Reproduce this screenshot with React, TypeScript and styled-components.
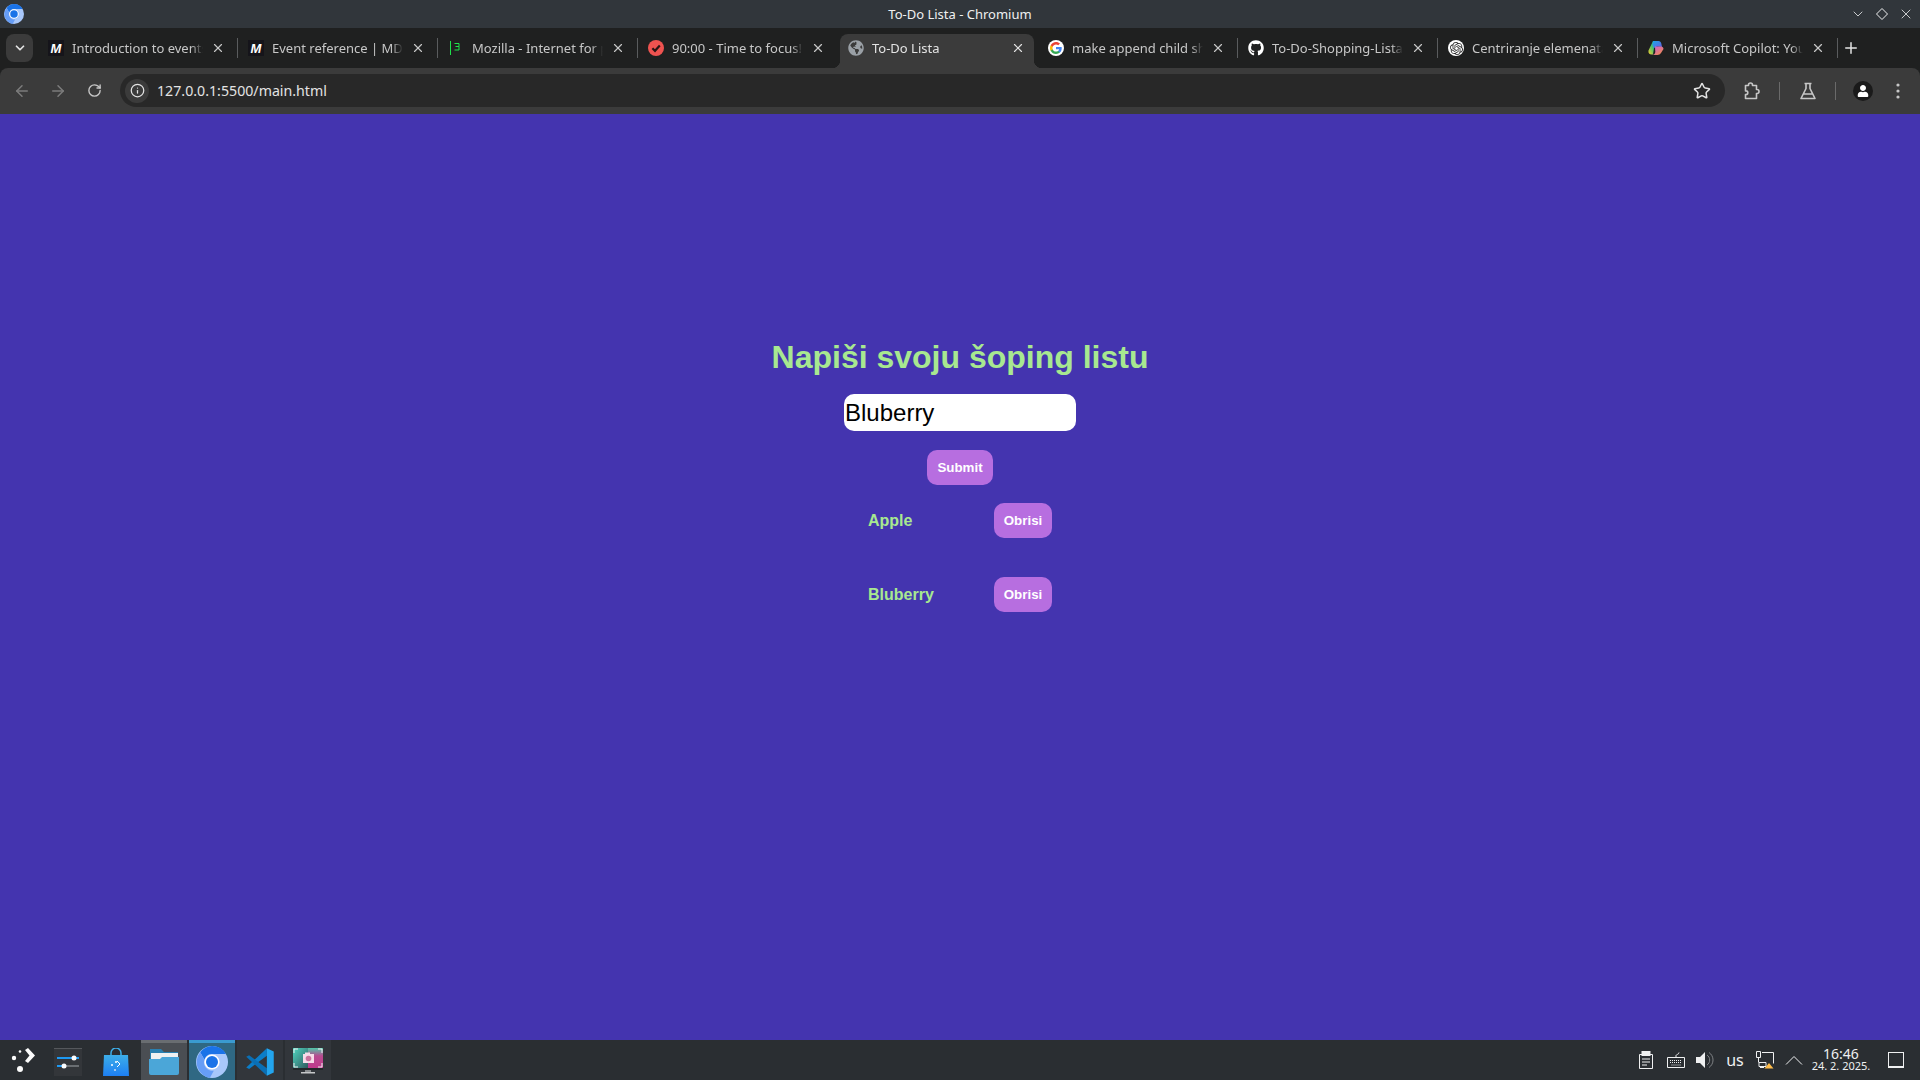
import React from "react";
import styled, { createGlobalStyle } from "styled-components";
import { ArrowLeft, ArrowRight, RotateCw, Info, Star, X, Plus, ChevronDown } from "lucide-react";
import { FaGithub, FaGlobeAmericas, FaUser } from "react-icons/fa";
import { SiOpenai } from "react-icons/si";

const Global = createGlobalStyle`
  html, body { margin: 0; padding: 0; height: 100%; overflow: hidden; }
  * { box-sizing: border-box; }
  body { font-family: "Noto Sans", sans-serif; }
`;

const Screen = styled.div`
  width: 1920px;
  height: 1080px;
  display: flex;
  flex-direction: column;
  background: #1f2020;
`;

const TitleBar = styled.div`
  height: 28px;
  flex: none;
  background: #31363b;
  display: flex;
  align-items: center;
  padding: 0 6px 0 4px;
  color: #eff0f1;
`;
const TitleText = styled.div`
  flex: 1;
  text-align: center;
  font-size: 13px;
  padding-left: 46px;
`;
const WinButtons = styled.div`
  display: flex;
  gap: 8px;
  align-items: center;
`;

const TabStrip = styled.div`
  height: 40px;
  flex: none;
  background: #1f2020;
  display: flex;
  padding: 6px 0 0 6px;
`;
const TabSearch = styled.div`
  width: 27px;
  height: 28px;
  border-radius: 8px;
  background: #3b3b3b;
  color: #e3e3e3;
  display: flex;
  align-items: center;
  justify-content: center;
  margin-right: 4px;
`;
const Tab = styled.div<{ $active?: boolean }>`
  position: relative;
  width: 200px;
  height: 34px;
  flex: none;
  display: flex;
  align-items: center;
  padding: 0 12px 6px 11px;
  font-size: 13px;
  color: ${(p) => (p.$active ? "#e3e3e3" : "#c7c7c7")};
  ${(p) =>
    p.$active
      ? `
    background: #3b3b3b;
    border-radius: 8px 8px 0 0;
    margin: 0 3px;
    width: 194px;
    padding: 0 9px 6px 8px;
    &::before, &::after {
      content: "";
      position: absolute;
      bottom: 0;
      width: 8px;
      height: 8px;
    }
    &::before { left: -8px; background: radial-gradient(circle at 0 0, #1f2020 8px, #3b3b3b 8.5px); }
    &::after { right: -8px; background: radial-gradient(circle at 100% 0, #1f2020 8px, #3b3b3b 8.5px); }
  `
      : ""}
`;
const TabLabel = styled.div`
  flex: 1;
  min-width: 0;
  margin: 0 8px;
  white-space: nowrap;
  overflow: hidden;
  -webkit-mask-image: linear-gradient(to right, #000 91%, transparent 100%);
  mask-image: linear-gradient(to right, #000 91%, transparent 100%);
`;
const TabSep = styled.div<{ $hidden?: boolean }>`
  width: 1px;
  height: 20px;
  margin: 4px -1px 0 0;
  flex: none;
  background: ${(p) => (p.$hidden ? "transparent" : "#5a5c5e")};
`;
const NewTab = styled.div`
  height: 28px;
  width: 28px;
  color: #e3e3e3;
  display: flex;
  align-items: center;
  justify-content: center;
`;

const Favicon = styled.span`
  width: 16px;
  height: 16px;
  flex: none;
  display: flex;
  align-items: center;
  justify-content: center;
`;
const MdnIcon = styled(Favicon)`
  background: #15141a;
  color: #fff;
  font: italic 700 13px "Liberation Sans", sans-serif;
`;
const OpenAiIcon = styled(Favicon)`
  background: #fff;
  border-radius: 50%;
  color: #2a2a2a;
`;

const Toolbar = styled.div`
  height: 46px;
  flex: none;
  background: #3b3b3b;
  border-radius: 8px 8px 0 0;
  display: flex;
  align-items: center;
  color: #c7c7c7;
  padding: 0 13px 1px 4px;
`;
const NavButton = styled.div<{ $dim?: boolean }>`
  width: 36px;
  height: 32px;
  flex: none;
  display: flex;
  align-items: center;
  justify-content: center;
  color: ${(p) => (p.$dim ? "#7c7c7c" : "#c7c7c7")};
`;
const Omnibox = styled.div`
  flex: 1;
  height: 33px;
  margin: 0 9px 0 8px;
  background: #282828;
  border-radius: 17px;
  display: flex;
  align-items: center;
  padding: 0 14px 0 5px;
`;
const SiteInfo = styled.div`
  width: 24px;
  height: 24px;
  border-radius: 50%;
  background: #3b3b3b;
  color: #e3e3e3;
  display: flex;
  align-items: center;
  justify-content: center;
  margin-right: 8px;
`;
const Url = styled.div`
  flex: 1;
  font-size: 14.2px;
  color: #e3e3e3;
`;
const ToolSep = styled.div`
  width: 1px;
  height: 18px;
  background: #6a6a6a;
`;
const ToolIcon = styled.div<{ $w: number }>`
  width: ${(p) => p.$w}px;
  flex: none;
  display: flex;
  align-items: center;
  justify-content: center;
  color: #c7c7c7;
`;
const ExtensionCell = styled(ToolIcon)`
  margin-right: 9px;
`;
const Avatar = styled.div`
  width: 20px;
  height: 20px;
  border-radius: 50%;
  background: #1a1a1a;
  display: flex;
  align-items: center;
  justify-content: center;
  overflow: hidden;
  color: #fff;
`;

const Page = styled.main`
  flex: 1;
  background: #4434af;
  display: flex;
  flex-direction: column;
  align-items: center;
  padding-top: 225px;
  font-family: "Liberation Sans", Arial, sans-serif;
`;
const Heading = styled.h1`
  margin: 0 0 18px;
  font-size: 32px;
  line-height: 37px;
  font-weight: 700;
  color: #a8e890;
`;
const TextInput = styled.input`
  width: 232px;
  height: 37px;
  border: none;
  outline: none;
  border-radius: 10px;
  padding: 0 1px;
  background: #fff;
  color: #000;
  font: 24px "Liberation Sans", Arial, sans-serif;
`;
const PurpleButton = styled.button`
  width: 58px;
  height: 35px;
  padding: 0;
  border: none;
  border-radius: 10px;
  background: #b76ee0;
  color: #fff;
  font: 700 13.33px "Liberation Sans", Arial, sans-serif;
`;
const SubmitButton = styled(PurpleButton)`
  width: 66px;
  margin-top: 19px;
`;
const List = styled.div`
  margin-top: 18px;
  display: flex;
  flex-direction: column;
  gap: 39px;
  width: 184px;
`;
const Row = styled.div`
  display: flex;
  align-items: center;
  justify-content: space-between;
`;
const ItemName = styled.span`
  font-size: 16px;
  font-weight: 700;
  color: #a8e890;
`;

const Taskbar = styled.div`
  height: 40px;
  flex: none;
  background: #2a2e32;
  display: flex;
  align-items: stretch;
`;
const Launcher = styled.div`
  width: 45px;
  display: flex;
  align-items: center;
  justify-content: center;
  padding-left: 2px;
`;
const TaskItems = styled.div`
  display: flex;
  gap: 2px;
`;
const TaskItem = styled.div<{ $state?: "open" | "active" | "idle" }>`
  width: 46px;
  display: flex;
  align-items: center;
  justify-content: center;
  border-top: 3px solid
    ${(p) => (p.$state === "active" ? "#3a9bd0" : p.$state === "open" ? "#696d71" : "transparent")};
  background: ${(p) =>
    p.$state === "active"
      ? "#2f6883"
      : p.$state === "open"
        ? "#4a4e53"
        : p.$state === "idle"
          ? "#32363b"
          : "transparent"};
`;
const Tray = styled.div`
  margin-left: auto;
  display: flex;
  align-items: center;
  color: #eff0f1;
`;
const TrayIcon = styled.div`
  width: 29.6px;
  display: flex;
  align-items: center;
  justify-content: center;
  font-size: 16px;
`;
const Clock = styled.div`
  width: 66px;
  margin-left: -1px;
  text-align: center;
  line-height: 12px;
  font-size: 14px;
  padding-bottom: 1px;
`;
const ClockDate = styled.div`
  font-size: 11px;
  line-height: 11px;
`;
const ShowDesktop = styled.div`
  width: 16px;
  height: 16px;
  margin: 0 16px 0 14px;
  border: 1px solid #eff0f1;
  border-bottom-width: 2px;
`;

const ChromiumLogo = ({ size }: { size: number }) => (
  <svg width={size} height={size} viewBox="0 0 32 32">
    <circle cx="16" cy="16" r="16" fill="#a8c7fa" />
    <path d="M16 0a16 16 0 0 1 13.9 8H16a8 8 0 0 0-7.600 5.600L4.200 6.200A16 16 0 0 1 16 0z" fill="#1a73e8" />
    <path d="M4.200 6.200A16 16 0 0 0 13.800 31.900l4-7.200A8.500 8.500 0 0 1 8.400 13.600z" fill="#669df6" />
    <circle cx="16" cy="16" r="7.600" fill="#fff" />
    <circle cx="16" cy="16" r="6" fill="#1a73e8" />
  </svg>
);

const GoogleIcon = () => (
  <svg width="16" height="16" viewBox="0 0 24 24">
    <circle cx="12" cy="12" r="12" fill="#fff" />
    <path fill="#4285f4" d="M20.600 12.200c0-.6-.1-1.200-.2-1.800H12v3.400h4.800c-.2 1.100-.8 2-1.800 2.700v2.200h2.900c1.700-1.600 2.700-3.800 2.700-6.500z" />
    <path fill="#34a853" d="M12 21c2.400 0 4.400-.8 5.900-2.200L15 16.500c-.8.500-1.800.9-3 .9-2.300 0-4.300-1.600-5-3.700H4v2.300C5.500 19 8.500 21 12 21z" />
    <path fill="#fbbc05" d="M7 13.700c-.2-.5-.3-1.100-.3-1.700s.1-1.200.3-1.700V8H4c-.6 1.200-1 2.600-1 4s.4 2.800 1 4z" />
    <path fill="#ea4335" d="M12 6.600c1.300 0 2.500.5 3.400 1.300l2.600-2.600C16.400 3.900 14.400 3 12 3 8.500 3 5.500 5 4 8l3 2.300c.7-2.100 2.700-3.700 5-3.700z" />
  </svg>
);

const FocusIcon = () => (
  <svg width="16" height="16" viewBox="0 0 16 16">
    <circle cx="8" cy="8" r="8" fill="#ef5350" />
    <path d="M4.400 8.200 7 10.800l4.800-5.200" fill="none" stroke="#2a1515" strokeWidth="2.200" />
  </svg>
);

const MozillaIcon = () => (
  <svg width="16" height="16" viewBox="0 0 16 16" fill="none" stroke="#1fe04a" strokeWidth="1">
    <path d="M2.500 1v14M6.500 3.500h4.500v3H7.500M11 6.500v3.500H6.500" />
  </svg>
);

const CopilotIcon = () => (
  <svg width="16" height="16" viewBox="0 0 16 16">
    <defs>
      <linearGradient id="cpA" x1="0" y1="0" x2="1" y2="1">
        <stop offset="0" stopColor="#1aa8e8" />
        <stop offset="1" stopColor="#6a5ae0" />
      </linearGradient>
      <linearGradient id="cpB" x1="0" y1="1" x2="1" y2="0">
        <stop offset="0" stopColor="#f7d02c" />
        <stop offset="0.55" stopColor="#3fbf70" />
        <stop offset="1" stopColor="#1aa8e8" />
      </linearGradient>
      <linearGradient id="cpC" x1="0" y1="0" x2="1" y2="1">
        <stop offset="0" stopColor="#c45ae0" />
        <stop offset="1" stopColor="#f8903c" />
      </linearGradient>
    </defs>
    <path d="M5 1h3L6 8l-1 6.500H3.500C1.500 14.500 0 13 .5 10.500z" fill="url(#cpB)" />
    <path d="M5 1h5.500C12 1 13 2 13.300 3.500L14 7 9 6.500 6 8 4.500 5z" fill="url(#cpA)" />
    <path d="M7 6.500h6c1.500 0 2.500 1 2.500 2.500L13 13c-.8 1.300-2 2-3.500 2H4c2 0 3-1 3.300-3z" fill="url(#cpC)" />
  </svg>
);

const ExtensionIcon = () => (
  <svg width="18" height="18" viewBox="0 0 18 18" fill="none" stroke="currentColor" strokeWidth="1.600" strokeLinejoin="round">
    <path d="M2.500 3.500h3V3a2 2 0 0 1 4 0v.5h4v4h.5a2 2 0 0 1 0 4h-.5v5h-11v-4h.5a1.800 1.800 0 0 0 0-3.600h-.5z" />
  </svg>
);

const FlaskIcon = () => (
  <svg width="18" height="18" viewBox="0 0 18 18" fill="none" stroke="currentColor" strokeWidth="1.600" strokeLinejoin="round">
    <path d="M5.500 1.500h7M7 1.500v5L2 16.500h14L11 6.500v-5M4.500 12h9" />
  </svg>
);

const MenuDots = () => (
  <svg width="4" height="16" viewBox="0 0 4 16" fill="currentColor">
    <circle cx="2" cy="2" r="1.600" />
    <circle cx="2" cy="8" r="1.600" />
    <circle cx="2" cy="14" r="1.600" />
  </svg>
);

const LauncherIcon = () => (
  <svg width="26" height="26" viewBox="0 0 26 26" fill="#fcfcfc">
    <circle cx="3" cy="11" r="2.200" />
    <circle cx="9" cy="4.500" r="1.300" />
    <circle cx="9" cy="22" r="3" />
    <path d="M14 3l3-2 7 7.500L17 16l-3-2 4.500-5.500z" />
  </svg>
);

const SettingsIcon = () => (
  <svg width="28" height="28" viewBox="0 0 28 28">
    <rect width="28" height="28" fill="#33363a" />
    <rect y="0" width="28" height="1" fill="#55585c" />
    <rect x="3" y="9" width="22" height="2" fill="#1d99f3" />
    <rect x="3" y="17" width="22" height="2" fill="#6a6e72" />
    <rect x="3" y="17" width="9" height="2" fill="#1d99f3" />
    <circle cx="20" cy="10" r="2.500" fill="#fcfcfc" />
    <circle cx="10" cy="18" r="2.500" fill="#fcfcfc" />
  </svg>
);

const StoreIcon = () => (
  <svg width="26" height="28" viewBox="0 0 26 28">
    <defs>
      <linearGradient id="storeBg" x1="0" y1="0" x2="0" y2="1">
        <stop offset="0" stopColor="#3daee9" />
        <stop offset="1" stopColor="#1d7ff3" />
      </linearGradient>
    </defs>
    <path d="M8 7V5a5 5 0 0 1 10 0v2" fill="none" stroke="#3daee9" strokeWidth="1.500" />
    <path d="M1 7h24l1 21H0z" fill="url(#storeBg)" />
    <circle cx="13" cy="14" r="1" fill="#fff" />
    <circle cx="9" cy="17" r="1" fill="#fff" />
    <path d="M14 13l3 3-3 3" stroke="#fff" fill="none" />
    <circle cx="12" cy="22" r="1" fill="#cde" />
  </svg>
);

const FolderIcon = () => (
  <svg width="30" height="28" viewBox="0 0 30 28">
    <path d="M1 1h11l3 3h14v22H1z" fill="#2a7fb0" />
    <rect x="2" y="5" width="27" height="9" fill="#eff0f1" />
    <path d="M0 11h11l2-2h17v16a2 2 0 0 1-2 2H2a2 2 0 0 1-2-2z" fill="#4ba6d8" />
  </svg>
);

const VsCodeIcon = () => (
  <svg width="30" height="30" viewBox="0 0 24 24">
    <path d="M17.500 1 17.500 7 3.300 17.500 1 16.300z" fill="#0b7dc8" />
    <path d="M1 7.700 3.300 6.500 17.500 17v6z" fill="#0a6fb5" />
    <path d="M17.500 1 23 3.600v16.800L17.500 23z" fill="#23a5ee" />
  </svg>
);

const ScreenshotIcon = () => (
  <svg width="30" height="27" viewBox="0 0 30 27">
    <defs>
      <linearGradient id="shotL" x1="0" y1="0" x2="1" y2="1">
        <stop offset="0" stopColor="#4fd6c0" />
        <stop offset="1" stopColor="#2f5a5e" />
      </linearGradient>
      <linearGradient id="shotR" x1="0" y1="0" x2="0" y2="1">
        <stop offset="0" stopColor="#4fc8a8" />
        <stop offset="0.4" stopColor="#b84a90" />
        <stop offset="1" stopColor="#c03a8c" />
      </linearGradient>
    </defs>
    <rect x="0" y="0" width="30" height="22" fill="#23272a" />
    <rect x="0" y="0" width="15" height="20" fill="url(#shotL)" />
    <rect x="15" y="0" width="15" height="20" fill="url(#shotR)" />
    <rect x="10" y="6" width="11" height="9" fill="#f6dbe8" />
    <rect x="12" y="4.500" width="5" height="2" fill="#f6dbe8" />
    <circle cx="15.500" cy="10.500" r="2.800" fill="#c9729c" />
    <path d="M1 5V1h4M25 1h4v4M1 15v4h4M25 19h4v-4" stroke="#eff0f1" fill="none" />
    <rect x="12" y="22" width="6" height="2" fill="#8a8d90" />
    <rect x="8" y="24" width="14" height="1.500" fill="#c5c7c9" />
  </svg>
);

const ClipboardIcon = () => (
  <svg width="16" height="18" viewBox="0 0 16 18" fill="none" stroke="currentColor">
    <path d="M1.500 3.500h13v14h-13z" />
    <rect x="4" y="0.500" width="8" height="4" fill="currentColor" />
    <path d="M4 8h8M4 11h8M4 14h5" />
  </svg>
);

const KeyboardIcon = () => (
  <svg width="18" height="18" viewBox="0 0 18 18" fill="none" stroke="currentColor">
    <path d="M.5 6.500h17v10H.5zM9 6.500V4.500c0-1 3-1 3-3" />
    <path d="M3 9.500h12M3 11.500h12M4.500 14h9" strokeDasharray="1 1" />
  </svg>
);

const SpeakerIcon = () => (
  <svg width="18" height="18" viewBox="0 0 18 18">
    <path d="M0 6h4l5-5v16l-5-5H0z" fill="currentColor" />
    <path d="M11 4a6 6 0 0 1 0 10M13 1.500a9 9 0 0 1 0 15" fill="none" stroke="#7f8285" />
  </svg>
);

const NetworkIcon = () => (
  <svg width="18" height="18" viewBox="0 0 18 18" fill="none" stroke="currentColor">
    <path d="M.5.500h4v6h-4zM6 1.500h11.500v11M2.500 6.500v5" />
    <path d="M3 11.500h7v4H3zM4 16.500h4" />
    <path d="M13 12l4.500 5.500h-9z" fill="#fdbc4b" stroke="none" />
  </svg>
);

const tabs = [
  { title: "Introduction to events", icon: <MdnIcon>M</MdnIcon> },
  { title: "Event reference | MDN", icon: <MdnIcon>M</MdnIcon> },
  { title: "Mozilla - Internet for people", icon: <Favicon><MozillaIcon /></Favicon> },
  { title: "90:00 - Time to focus!", icon: <Favicon><FocusIcon /></Favicon> },
  { title: "To-Do Lista", icon: <Favicon><FaGlobeAmericas size={16} color="#9aa0a6" /></Favicon>, active: true },
  { title: "make append child show", icon: <Favicon><GoogleIcon /></Favicon> },
  { title: "To-Do-Shopping-Lista", icon: <Favicon><FaGithub size={16} color="#fff" /></Favicon> },
  { title: "Centriranje elemenata", icon: <OpenAiIcon><SiOpenai size={13} /></OpenAiIcon> },
  { title: "Microsoft Copilot: Your AI", icon: <Favicon><CopilotIcon /></Favicon> },
];

export default function App() {
  return (
    <Screen>
      <Global />
      <TitleBar>
        <ChromiumLogo size={20} />
        <TitleText>To-Do Lista - Chromium</TitleText>
        <WinButtons>
          <ChevronDown size={16} strokeWidth={1.2} />
          <svg width="16" height="16" viewBox="0 0 16 16" fill="none" stroke="currentColor">
            <path d="M8 2.500 13.500 8 8 13.500 2.500 8z" />
          </svg>
          <X size={16} strokeWidth={1.2} />
        </WinButtons>
      </TitleBar>

      <TabStrip>
        <TabSearch>
          <ChevronDown size={14} strokeWidth={3} />
        </TabSearch>
        {tabs.map((t, i) => (
          <React.Fragment key={t.title}>
            <Tab $active={t.active}>
              {t.icon}
              <TabLabel>{t.title}</TabLabel>
              <X size={14} strokeWidth={2} />
            </Tab>
            <TabSep $hidden={t.active || tabs[i + 1]?.active} />
          </React.Fragment>
        ))}
        <NewTab>
          <Plus size={18} strokeWidth={2} />
        </NewTab>
      </TabStrip>

      <Toolbar>
        <NavButton $dim>
          <ArrowLeft size={18} />
        </NavButton>
        <NavButton $dim>
          <ArrowRight size={18} />
        </NavButton>
        <NavButton>
          <RotateCw size={15} strokeWidth={2.2} />
        </NavButton>
        <Omnibox>
          <SiteInfo>
            <Info size={15} />
          </SiteInfo>
          <Url>127.0.0.1:5500/main.html</Url>
          <Star size={18} strokeWidth={2} color="#e3e3e3" />
        </Omnibox>
        <ExtensionCell $w={36}>
          <ExtensionIcon />
        </ExtensionCell>
        <ToolSep />
        <ToolIcon $w={55}>
          <FlaskIcon />
        </ToolIcon>
        <ToolSep />
        <ToolIcon $w={53}>
          <Avatar>
            <FaUser size={12} />
          </Avatar>
        </ToolIcon>
        <ToolIcon $w={18}>
          <MenuDots />
        </ToolIcon>
      </Toolbar>

      <Page>
        <Heading>Napiši svoju šoping listu</Heading>
        <TextInput defaultValue="Bluberry" />
        <SubmitButton>Submit</SubmitButton>
        <List>
          <Row>
            <ItemName>Apple</ItemName>
            <PurpleButton>Obrisi</PurpleButton>
          </Row>
          <Row>
            <ItemName>Bluberry</ItemName>
            <PurpleButton>Obrisi</PurpleButton>
          </Row>
        </List>
      </Page>

      <Taskbar>
        <Launcher>
          <LauncherIcon />
        </Launcher>
        <TaskItems>
          <TaskItem><SettingsIcon /></TaskItem>
          <TaskItem><StoreIcon /></TaskItem>
          <TaskItem $state="open"><FolderIcon /></TaskItem>
          <TaskItem $state="active"><ChromiumLogo size={32} /></TaskItem>
          <TaskItem $state="idle"><VsCodeIcon /></TaskItem>
          <TaskItem $state="idle"><ScreenshotIcon /></TaskItem>
        </TaskItems>
        <Tray>
          <TrayIcon><ClipboardIcon /></TrayIcon>
          <TrayIcon><KeyboardIcon /></TrayIcon>
          <TrayIcon><SpeakerIcon /></TrayIcon>
          <TrayIcon>us</TrayIcon>
          <TrayIcon><NetworkIcon /></TrayIcon>
          <TrayIcon>
            <svg width="18" height="10" viewBox="0 0 18 10" fill="none" stroke="currentColor">
              <path d="M1 9.500l8-8 8 8" />
            </svg>
          </TrayIcon>
          <Clock>
            16:46
            <ClockDate>24. 2. 2025.</ClockDate>
          </Clock>
          <ShowDesktop />
        </Tray>
      </Taskbar>
    </Screen>
  );
}
